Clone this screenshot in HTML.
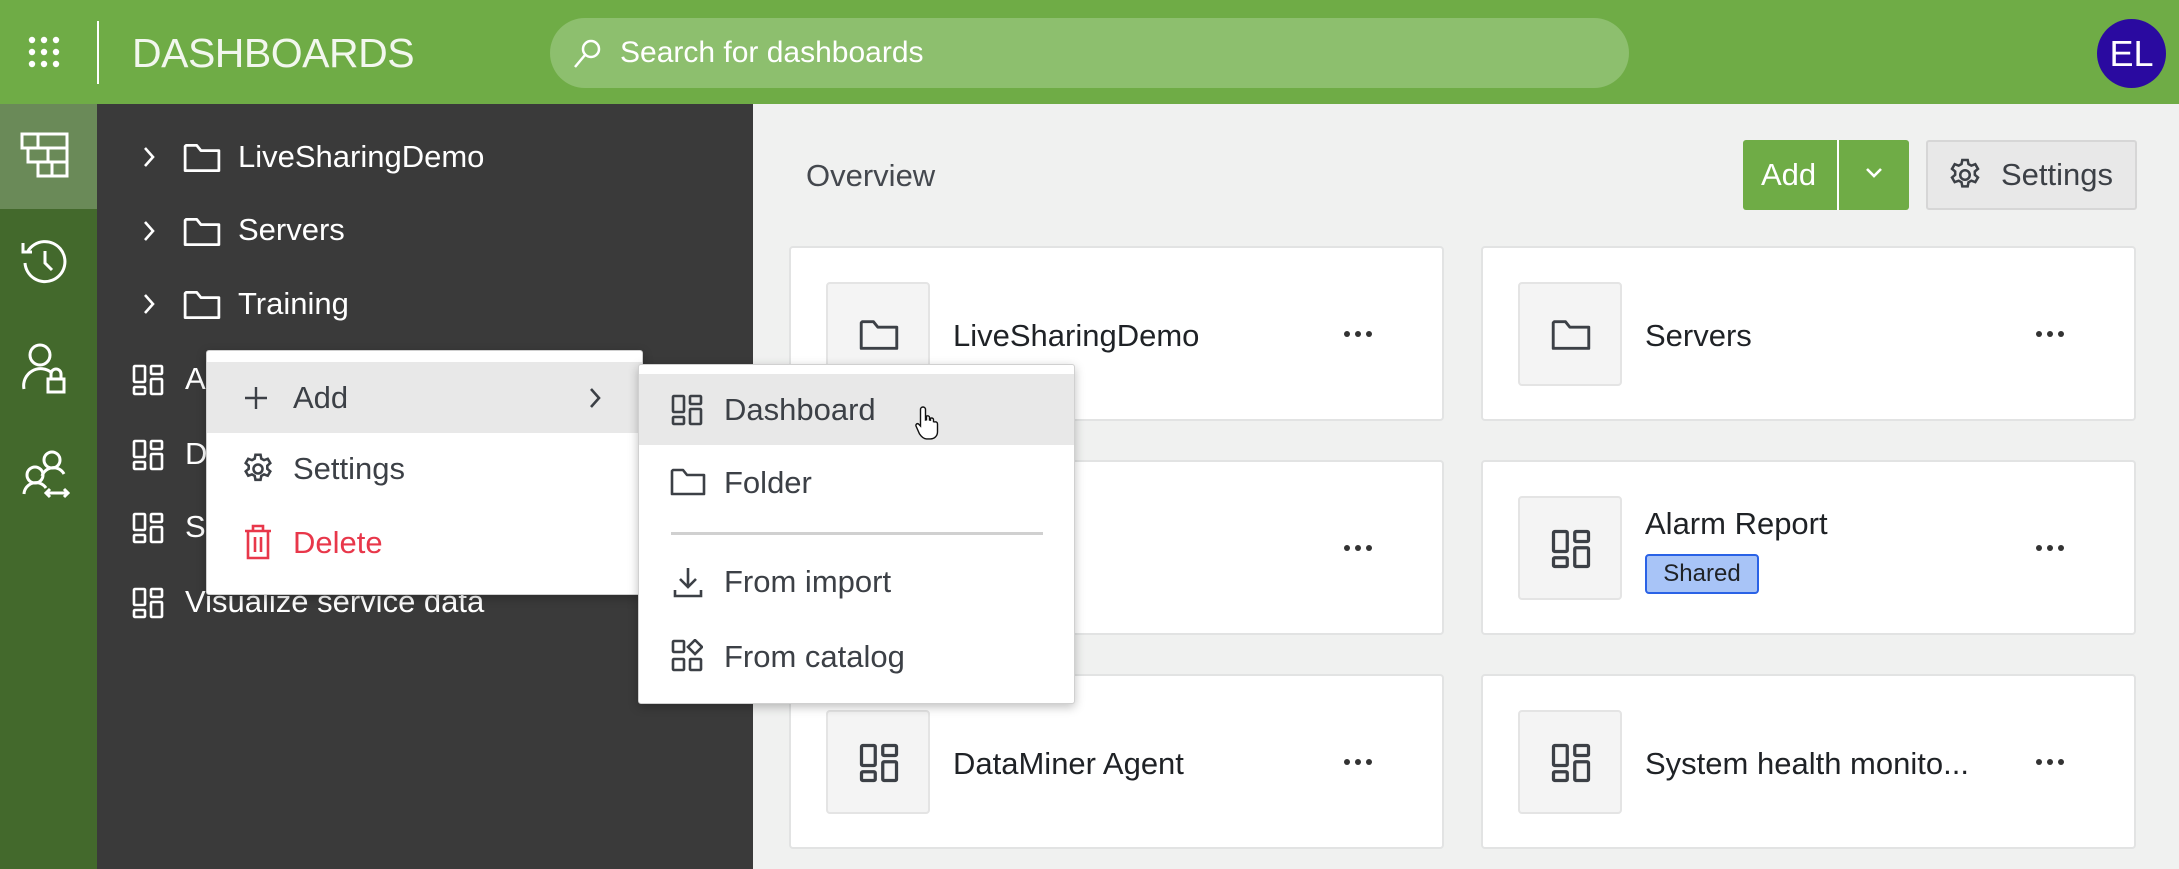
<!DOCTYPE html>
<html><head><meta charset="utf-8"><style>
*{margin:0;padding:0;box-sizing:border-box}
body{width:2179px;height:869px;overflow:hidden;background:#f0f1f0;font-family:"Liberation Sans",sans-serif;position:relative;color:#2d3036}
.abs{position:absolute}
.top{left:0;top:0;width:2179px;height:104px;background:#6fac46}
.rail{left:0;top:104px;width:97px;height:765px;background:#43692c}
.railsel{left:0;top:104px;width:97px;height:105px;background:#6a8a58}
.tree{left:97px;top:104px;width:656px;height:765px;background:#3a3a3a}
.ti{position:absolute;color:#fff;font-size:31px;line-height:34px}
.card{position:absolute;background:#fff;border:2px solid #e2e3e3;border-radius:4px;width:655px;height:175px}
.ib{position:absolute;left:35px;top:34px;width:104px;height:104px;background:#f4f4f4;border:2px solid #e4e4e4;border-radius:4px}
.ib svg{position:absolute;left:31px;top:31px}
.ct{position:absolute;left:162px;font-size:31px;color:#1f2226}
.dots{position:absolute;left:552px;top:82px}
.menu{position:absolute;background:#fff;border:1px solid #d0d0d0;box-shadow:0 3px 10px rgba(0,0,0,.25);border-radius:3px}
.mi{position:absolute;left:0;width:100%;height:71px;font-size:31px;color:#3c4046}
.mi span{position:absolute;top:18px}
.mi svg{position:absolute}
</style></head><body>
<div class="abs top"></div>
<svg class="abs" style="left:28px;top:36px" width="32" height="32" fill="#fff"><circle cx="4" cy="4" r="3.2"/><circle cx="16" cy="4" r="3.2"/><circle cx="28" cy="4" r="3.2"/><circle cx="4" cy="16" r="3.2"/><circle cx="16" cy="16" r="3.2"/><circle cx="28" cy="16" r="3.2"/><circle cx="4" cy="28" r="3.2"/><circle cx="16" cy="28" r="3.2"/><circle cx="28" cy="28" r="3.2"/></svg>
<div class="abs" style="left:97px;top:21px;width:2px;height:63px;background:#fff"></div>
<div class="abs" style="left:132px;top:30px;font-size:41px;color:#f2f7ee;letter-spacing:-0.5px">DASHBOARDS</div>
<div class="abs" style="left:550px;top:18px;width:1079px;height:70px;border-radius:35px;background:#8dbf6e"></div>
<svg class="abs" style="left:572px;top:38px" width="30" height="32" fill="none" stroke="#fff" stroke-width="2.5"><circle cx="19" cy="11" r="8"/><path d="M13 17 L3 29"/></svg>
<div class="abs" style="left:620px;top:36px;font-size:30px;color:#fff">Search for dashboards</div>
<div class="abs" style="left:2097px;top:19px;width:69px;height:69px;border-radius:50%;background:#2a0aa0;color:#fff;font-size:36px;text-align:center;line-height:69px">EL</div>

<div class="abs rail"></div>
<div class="abs railsel"></div>
<svg class="abs" style="left:20px;top:132px" width="50" height="48" fill="none" stroke="#fff" stroke-width="3"><path d="M2 2H47V44H18V30H8V16H2Z M2 16H47 M8 30H47 M18 2V16 M28 16V30 M32 30V44"/></svg>
<svg class="abs" style="left:20px;top:237px" width="50" height="50" fill="none" stroke="#fff" stroke-width="3"><path d="M8 14 A20 20 0 1 1 5 26"/><path d="M3 6V15H12"/><path d="M25 14V26L32 33"/></svg>
<svg class="abs" style="left:22px;top:343px" width="50" height="52" fill="none" stroke="#fff" stroke-width="3"><circle cx="18" cy="12" r="10"/><path d="M2 46 A17 17 0 0 1 30 30"/><rect x="26" y="36" width="16" height="13" fill="none"/><path d="M29 36V31a5 5 0 0 1 10 0V36"/></svg>
<svg class="abs" style="left:22px;top:450px" width="52" height="52" fill="none" stroke="#fff" stroke-width="3"><circle cx="30" cy="10" r="8"/><path d="M20 26 A12 12 0 0 1 42 24"/><circle cx="13" cy="25" r="8"/><path d="M2 44 A12 12 0 0 1 24 38"/><path d="M24 43H46 M28 39L24 43L28 47 M42 39L46 43L42 47"/></svg>

<div class="abs tree"></div>
<svg width="0" height="0" style="position:absolute"><defs>
<symbol id="fold" viewBox="0 0 36 30"><path d="M2 4V27H34V8H17L13 3H3Z" fill="none" stroke="currentColor" stroke-width="2.6" stroke-linejoin="round"/></symbol>
<symbol id="dash" viewBox="0 0 32 32"><g fill="none" stroke="currentColor" stroke-width="2.6"><rect x="2" y="2" width="11" height="16" rx="1"/><rect x="19" y="2" width="11" height="8" rx="1"/><rect x="2" y="23" width="11" height="7" rx="1"/><rect x="19" y="15" width="11" height="15" rx="1"/></g></symbol>
<symbol id="chev" viewBox="0 0 16 24"><path d="M4 3L12 12L4 21" fill="none" stroke="currentColor" stroke-width="2.6"/></symbol>
<symbol id="dots" viewBox="0 0 30 8"><g fill="#333"><circle cx="4" cy="4" r="3"/><circle cx="15" cy="4" r="3"/><circle cx="26" cy="4" r="3"/></g></symbol>
</defs></svg>
<svg class="abs" style="left:141px;top:145px;color:#fff" width="16" height="24"><use href="#chev"/></svg>
<svg class="abs" style="left:183px;top:142px;color:#fff" width="38" height="32"><use href="#fold"/></svg>
<div class="ti" style="left:238px;top:140px">LiveSharingDemo</div>
<svg class="abs" style="left:141px;top:219px;color:#fff" width="16" height="24"><use href="#chev"/></svg>
<svg class="abs" style="left:183px;top:216px;color:#fff" width="38" height="32"><use href="#fold"/></svg>
<div class="ti" style="left:238px;top:213px">Servers</div>
<svg class="abs" style="left:141px;top:292px;color:#fff" width="16" height="24"><use href="#chev"/></svg>
<svg class="abs" style="left:183px;top:289px;color:#fff" width="38" height="32"><use href="#fold"/></svg>
<div class="ti" style="left:238px;top:287px">Training</div>
<svg class="abs" style="left:132px;top:364px;color:#fff" width="32" height="32"><use href="#dash"/></svg>
<div class="ti" style="left:185px;top:362px">A</div>
<svg class="abs" style="left:132px;top:439px;color:#fff" width="32" height="32"><use href="#dash"/></svg>
<div class="ti" style="left:185px;top:437px">D</div>
<svg class="abs" style="left:132px;top:512px;color:#fff" width="32" height="32"><use href="#dash"/></svg>
<div class="ti" style="left:185px;top:510px">S</div>
<svg class="abs" style="left:132px;top:587px;color:#fff" width="32" height="32"><use href="#dash"/></svg>
<div class="ti" style="left:185px;top:585px">Visualize service data</div>

<div class="abs" style="left:806px;top:158px;font-size:31px;color:#44484e">Overview</div>
<div class="abs" style="left:1743px;top:140px;width:166px;height:70px;background:#6fac46;border-radius:3px"></div>
<div class="abs" style="left:1837px;top:140px;width:2px;height:70px;background:#fff"></div>
<div class="abs" style="left:1761px;top:157px;font-size:31px;color:#fff">Add</div>
<svg class="abs" style="left:1864px;top:166px" width="20" height="14" fill="none" stroke="#fff" stroke-width="2.6"><path d="M3 3L10 10L17 3"/></svg>
<div class="abs" style="left:1926px;top:140px;width:211px;height:70px;background:#e8e8e8;border:2px solid #d6d6d6;border-radius:3px"></div>
<svg class="abs" style="left:1946px;top:156px" width="38" height="38" viewBox="0 0 24 24" fill="none" stroke="#3c4046" stroke-width="1.6"><circle cx="12" cy="12" r="3"/><path d="M10.3 2.5h3.4l.5 2.6 1.8 1 2.5-.9 1.7 2.9-2 1.7v2.1l2 1.7-1.7 2.9-2.5-.9-1.8 1-.5 2.6h-3.4l-.5-2.6-1.8-1-2.5.9-1.7-2.9 2-1.7v-2.1l-2-1.7 1.7-2.9 2.5.9 1.8-1z"/></svg>
<div class="abs" style="left:2001px;top:157px;font-size:31px;color:#3c4046">Settings</div>

<div class="card" style="left:789px;top:246px"><div class="ib"><svg width="40" height="40" style="color:#3c4046"><use href="#fold"/></svg></div><div class="ct" style="top:70px">LiveSharingDemo</div><svg class="dots" width="30" height="8"><use href="#dots"/></svg></div>
<div class="card" style="left:1481px;top:246px"><div class="ib"><svg width="40" height="40" style="color:#3c4046"><use href="#fold"/></svg></div><div class="ct" style="top:70px">Servers</div><svg class="dots" width="30" height="8"><use href="#dots"/></svg></div>
<div class="card" style="left:789px;top:460px"><div class="ib"><svg width="40" height="40" style="color:#3c4046"><use href="#dash"/></svg></div><svg class="dots" width="30" height="8"><use href="#dots"/></svg></div>
<div class="card" style="left:1481px;top:460px"><div class="ib"><svg width="40" height="40" style="color:#3c4046"><use href="#dash"/></svg></div><div class="ct" style="top:44px">Alarm Report</div>
<div style="position:absolute;left:162px;top:92px;width:114px;height:40px;background:#a8c4f7;border:2px solid #2a62e6;border-radius:4px;font-size:24px;text-align:center;line-height:36px;color:#1f2226">Shared</div><svg class="dots" width="30" height="8"><use href="#dots"/></svg></div>
<div class="card" style="left:789px;top:674px"><div class="ib"><svg width="40" height="40" style="color:#3c4046"><use href="#dash"/></svg></div><div class="ct" style="top:70px">DataMiner Agent</div><svg class="dots" width="30" height="8"><use href="#dots"/></svg></div>
<div class="card" style="left:1481px;top:674px"><div class="ib"><svg width="40" height="40" style="color:#3c4046"><use href="#dash"/></svg></div><div class="ct" style="top:70px">System health monito...</div><svg class="dots" width="30" height="8"><use href="#dots"/></svg></div>

<div class="menu" style="left:206px;top:350px;width:437px;height:245px">
 <div class="mi" style="top:11px;background:#e8e8e8"><svg style="left:36px;top:23px" width="26" height="26" stroke="#3c4046" stroke-width="2.4"><path d="M13 2V24M2 13H24"/></svg><span style="left:86px">Add</span><svg style="left:380px;top:24px;color:#3c4046" width="16" height="24"><use href="#chev"/></svg></div>
 <div class="mi" style="top:82px"><svg style="left:33px;top:18px" width="36" height="36" viewBox="0 0 24 24" fill="none" stroke="#3c4046" stroke-width="1.7"><circle cx="12" cy="12" r="3"/><path d="M10.3 2.5h3.4l.5 2.6 1.8 1 2.5-.9 1.7 2.9-2 1.7v2.1l2 1.7-1.7 2.9-2.5-.9-1.8 1-.5 2.6h-3.4l-.5-2.6-1.8-1-2.5.9-1.7-2.9 2-1.7v-2.1l-2-1.7 1.7-2.9 2.5.9 1.8-1z"/></svg><span style="left:86px">Settings</span></div>
 <div class="mi" style="top:156px;color:#e8374a"><svg style="left:37px;top:17px" width="28" height="36" fill="none" stroke="#e8374a" stroke-width="2.6"><path d="M1 7H27M9 7V2H19V7M4 7V34H24V7M11 13V28M17 13V28"/></svg><span style="left:86px">Delete</span></div>
</div>
<div class="menu" style="left:638px;top:364px;width:437px;height:340px">
 <div class="mi" style="top:9px;background:#e8e8e8"><svg style="left:32px;top:20px;color:#3c4046" width="32" height="32"><use href="#dash"/></svg><span style="left:85px">Dashboard</span></div>
 <div class="mi" style="top:82px"><svg style="left:31px;top:19px;color:#3c4046" width="36" height="32"><use href="#fold"/></svg><span style="left:85px">Folder</span></div>
 <div style="position:absolute;left:32px;top:167px;width:372px;height:3px;background:#d0d0d0"></div>
 <div class="mi" style="top:181px"><svg style="left:33px;top:20px" width="32" height="32" fill="none" stroke="#3c4046" stroke-width="2.6"><path d="M16 2V21M8 13L16 21L24 13M3 24V30H29V24"/></svg><span style="left:85px">From import</span></div>
 <div class="mi" style="top:256px"><svg style="left:32px;top:18px" width="32" height="34" fill="none" stroke="#3c4046" stroke-width="2.6"><rect x="2" y="2" width="11" height="11" rx="1"/><path d="M24 1L31 8L24 15L17 8Z"/><rect x="2" y="20" width="11" height="11" rx="1"/><rect x="19" y="20" width="11" height="11" rx="1"/></svg><span style="left:85px">From catalog</span></div>
</div>
<svg class="abs" style="left:915px;top:405px" width="26" height="36" viewBox="0 0 26 36"><path d="M8 2c1.5 0 2.5 1 2.5 2.5V15l1-.2V11c1.5-.5 3 0 3 1.5V15l1 .2v-2c1.5-.5 3 0 3 1.5v2l1 .2c1.5-.3 3 .3 3 2v8c0 4-3 7-7 7h-4c-3 0-5-2-7-5L1 21c-.5-1.5 1-3 2.5-2L5.5 21V4.5C5.5 3 6.5 2 8 2Z" fill="#fff" stroke="#111" stroke-width="1.4"/></svg>
</body></html>
